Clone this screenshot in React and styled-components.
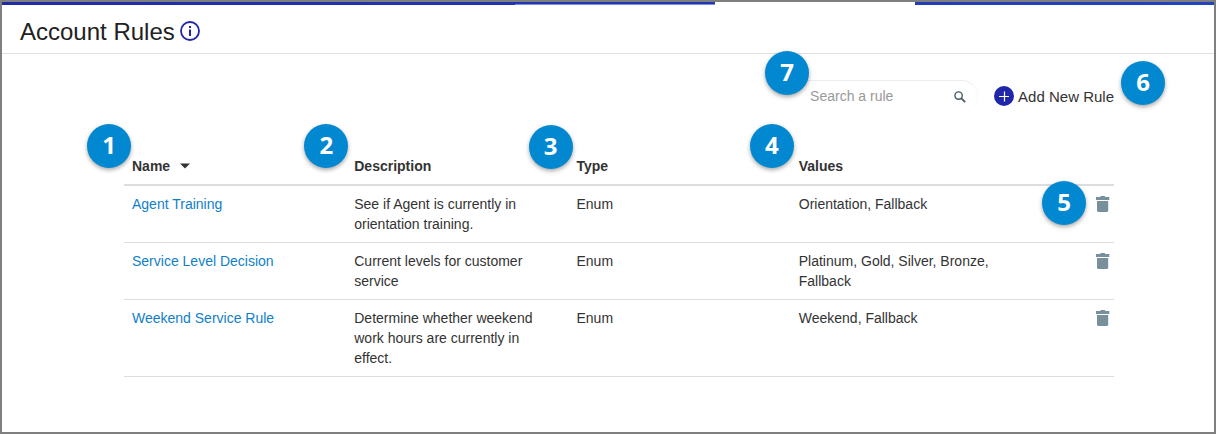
import React, { useState } from 'react';
import styled, { createGlobalStyle } from 'styled-components';

const GlobalStyle = createGlobalStyle`
  * {
    box-sizing: border-box;
  }

  body {
    margin: 0;
    background: #fff;
    color: #333;
    font-family: "Liberation Sans", Arial, sans-serif;
    font-size: 14px;
    line-height: 20px;
  }
`;

const Page = styled.div`
  min-height: 100vh;
  border: 2px solid #7f7f7f;
`;

const TabStrip = styled.div`
  display: flex;
  height: 3px;
  background: linear-gradient(to right, #1f2ba7, #2342bd);
`;

const TabSpace = styled.div`
  flex: ${(props) => props.$grow};
`;

const Tab = styled.div`
  width: 200px;
  border-bottom: 1px solid ${(props) => (props.$active ? '#fff' : '#7f8bd2')};
  background: ${(props) => (props.$active ? '#fff' : 'transparent')};
`;

const Header = styled.header`
  display: flex;
  align-items: center;
  gap: 5px;
  height: 49px;
  padding: 4px 18px 0;
  border-bottom: 1px solid #e0e0e0;
`;

const Title = styled.h1`
  margin: 0;
  padding-top: 2px;
  color: #212121;
  font-size: 24px;
  font-weight: 400;
  line-height: 28px;
`;

const IconButton = styled.button`
  display: flex;
  padding: 0;
  border: 0;
  background: none;
  color: inherit;
  cursor: pointer;
`;

const Content = styled.main`
  padding: 26px 100px 24px 122px;
`;

const Toolbar = styled.div`
  display: flex;
  justify-content: flex-end;
  align-items: center;
  gap: 16px;
  margin-bottom: 36px;
`;

const SearchBox = styled.label`
  position: relative;
  display: flex;
  align-items: center;
  width: 184px;
  height: 32px;
  padding: 0 11px 0 16px;
  border-top: 1px solid #ececec;
  border-right: 1px solid #f8f8f8;
  border-radius: 16px;
`;

const SearchInput = styled.input`
  flex: 1;
  min-width: 0;
  padding: 0 0 2px;
  border: 0;
  outline: none;
  background: none;
  color: #333;
  font: inherit;

  &::placeholder {
    color: #999;
    opacity: 1;
  }
`;

const AddButton = styled.button`
  position: relative;
  display: flex;
  align-items: center;
  gap: 4px;
  padding: 0;
  border: 0;
  background: none;
  color: #333;
  font-family: inherit;
  font-size: 15px;
  line-height: 20px;
  cursor: pointer;
`;

const AddLabel = styled.span`
  padding-top: 2px;
`;

const Table = styled.table`
  width: 100%;
  border-collapse: separate;
  border-spacing: 0;
  table-layout: fixed;
`;

const HeadCell = styled.th`
  position: relative;
  width: ${(props) => props.$width || 'auto'};
  padding: 8px;
  border-bottom: 2px solid #ddd;
  text-align: left;
  font-weight: 700;
`;

const Cell = styled.td`
  position: relative;
  padding: 8px ${(props) => (props.$actions ? '4px' : '8px')};
  border-bottom: 1px solid #ddd;
  vertical-align: top;
`;

const SortButton = styled.button`
  display: flex;
  align-items: center;
  gap: 10px;
  padding: 0;
  border: 0;
  background: none;
  color: inherit;
  font: inherit;
  cursor: pointer;
`;

const SortArrow = styled.svg`
  transform: ${(props) => (props.$up ? 'rotate(180deg)' : 'none')};
`;

const RuleLink = styled.a`
  color: #0f7fc9;
  text-decoration: none;

  &:hover {
    text-decoration: underline;
  }
`;

const DeleteButton = styled(IconButton)`
  margin-left: auto;
  padding: 2px 0;
  color: #78909c;
`;

// numbered marker that hangs over the element it belongs to
const Marker = styled.span`
  position: absolute;
  top: ${(props) => props.$top}px;
  left: ${(props) => props.$left}px;
  z-index: 1;
  display: flex;
  justify-content: center;
  width: 44px;
  height: 44px;
  border-radius: 50%;
  background: #0288d1;
  box-shadow: 0 2px 4px rgba(0, 0, 0, 0.35);
  color: #fff;
  font-family: "Open Sans", "Noto Sans", sans-serif;
  font-size: 24px;
  font-weight: 700;
  line-height: 41px;
`;

const InfoIcon = () => (
  <svg width="20" height="20" viewBox="0 0 20 20" fill="#1f27a8">
    <circle cx="10" cy="10" r="9" fill="none" stroke="#1f27a8" strokeWidth="1.8" />
    <rect x="9" y="5" width="2" height="2" />
    <rect x="9" y="8.5" width="2" height="6.5" />
  </svg>
);

const SearchIcon = () => (
  <svg width="12" height="12" viewBox="0 0 12 12" fill="none" stroke="#455a64">
    <circle cx="4.6" cy="4.6" r="3.7" strokeWidth="1.4" />
    <path d="M7.3 7.3 L11.2 11.2" strokeWidth="1.8" />
  </svg>
);

const PlusIcon = () => (
  <svg width="20" height="20" viewBox="0 0 20 20">
    <circle cx="10" cy="10" r="10" fill="#1f27a8" />
    <path d="M5 10.5 H15 M10.5 5.5 V15.5" stroke="#fff" strokeWidth="1.2" />
  </svg>
);

const TrashIcon = () => (
  <svg width="14" height="16" viewBox="0 0 14 16" fill="currentColor">
    <path d="M0 1 H4 L5 0 H8.5 L9.5 1 H13.3 V4 H0 Z" />
    <path d="M1 5 H12.2 V15 L11.2 16 H2 L1 15 Z" />
  </svg>
);

const initialRules = [
  {
    name: 'Agent Training',
    description: 'See if Agent is currently in orientation training.',
    type: 'Enum',
    values: 'Orientation, Fallback',
    marker: 5,
  },
  {
    name: 'Service Level Decision',
    description: 'Current levels for customer service',
    type: 'Enum',
    values: 'Platinum, Gold, Silver, Bronze, Fallback',
  },
  {
    name: 'Weekend Service Rule',
    description: 'Determine whether weekend work hours are currently in effect.',
    type: 'Enum',
    values: 'Weekend, Fallback',
  },
];

const App = () => {
  const [rules, setRules] = useState(initialRules);
  const [search, setSearch] = useState('');
  const [descending, setDescending] = useState(false);

  const visibleRules = rules
    .filter((rule) => rule.name.toLowerCase().includes(search.toLowerCase()))
    .sort((a, b) => a.name.localeCompare(b.name) * (descending ? -1 : 1));

  const handleDelete = (name) => {
    setRules(rules.filter((rule) => rule.name !== name));
  };

  return (
    <Page>
      <GlobalStyle />
      <TabStrip>
        <TabSpace $grow={513} />
        <Tab />
        <Tab $active />
        <TabSpace $grow={299} />
      </TabStrip>
      <Header>
        <Title>Account Rules</Title>
        <IconButton type="button" aria-label="About account rules">
          <InfoIcon />
        </IconButton>
      </Header>
      <Content>
        <Toolbar>
          <SearchBox>
            <Marker $top={-30} $left={-29}>7</Marker>
            <SearchInput
              type="text"
              aria-label="Search a rule"
              placeholder="Search a rule"
              value={search}
              onChange={(e) => setSearch(e.target.value)}
            />
            <SearchIcon />
          </SearchBox>
          <AddButton type="button">
            <PlusIcon />
            <AddLabel>Add New Rule</AddLabel>
            <Marker $top={-24} $left={127}>6</Marker>
          </AddButton>
        </Toolbar>
        <Table>
          <thead>
            <tr>
              <HeadCell>
                <Marker $top={-24} $left={-37}>1</Marker>
                <SortButton type="button" onClick={() => setDescending(!descending)}>
                  Name
                  <SortArrow $up={descending} width="10" height="6" viewBox="0 0 10 6" fill="#333">
                    <path d="M0 0.5 H10 L5 5.5 Z" />
                  </SortArrow>
                </SortButton>
              </HeadCell>
              <HeadCell>
                <Marker $top={-24} $left={-42}>2</Marker>
                Description
              </HeadCell>
              <HeadCell>
                <Marker $top={-23} $left={-40}>3</Marker>
                Type
              </HeadCell>
              <HeadCell>
                <Marker $top={-24} $left={-41}>4</Marker>
                Values
              </HeadCell>
              <HeadCell $width="101px" aria-label="Actions" />
            </tr>
          </thead>
          <tbody>
            {visibleRules.map((rule) => (
              <tr key={rule.name}>
                <Cell>
                  <RuleLink href="#">{rule.name}</RuleLink>
                </Cell>
                <Cell>{rule.description}</Cell>
                <Cell>{rule.type}</Cell>
                <Cell>{rule.values}</Cell>
                <Cell $actions>
                  {rule.marker && <Marker $top={-5} $left={29}>{rule.marker}</Marker>}
                  <DeleteButton
                    type="button"
                    aria-label={`Delete ${rule.name}`}
                    onClick={() => handleDelete(rule.name)}
                  >
                    <TrashIcon />
                  </DeleteButton>
                </Cell>
              </tr>
            ))}
          </tbody>
        </Table>
      </Content>
    </Page>
  );
};

export default App;
